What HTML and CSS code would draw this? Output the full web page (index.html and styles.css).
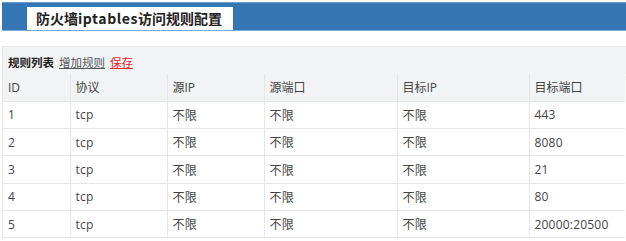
FILE: index.html
```html
<!DOCTYPE html>
<html>
<head>
<meta charset="utf-8">
<link rel="stylesheet" href="styles.css">
</head>
<body>
<div class="page">
  <div class="topbar">
    <div class="tab">防火墙<span class="latin">iptables</span>访问规则配置</div>
  </div>
  <div class="panel">
    <div class="toolbar">
      <span class="label">规则列表</span>
      <a class="link" href="#">增加规则</a>
      <a class="link save" href="#">保存</a>
    </div>
    <table class="rules">
      <colgroup>
        <col class="c1"><col class="c2"><col class="c3"><col class="c4"><col class="c5"><col class="c6">
      </colgroup>
      <thead>
        <tr><th>ID</th><th>协议</th><th>源IP</th><th>源端口</th><th>目标IP</th><th>目标端口</th></tr>
      </thead>
      <tbody>
        <tr><td>1</td><td>tcp</td><td>不限</td><td>不限</td><td>不限</td><td>443</td></tr>
        <tr><td>2</td><td>tcp</td><td>不限</td><td>不限</td><td>不限</td><td>8080</td></tr>
        <tr><td>3</td><td>tcp</td><td>不限</td><td>不限</td><td>不限</td><td>21</td></tr>
        <tr><td>4</td><td>tcp</td><td>不限</td><td>不限</td><td>不限</td><td>80</td></tr>
        <tr><td>5</td><td>tcp</td><td>不限</td><td>不限</td><td>不限</td><td>20000:20500</td></tr>
      </tbody>
    </table>
  </div>
</div>
</body>
</html>
```
FILE: styles.css
```css
html, body { margin: 0; padding: 0; background: #fff; }
body {
  font-family: "Open Sans", "Noto Sans CJK SC", sans-serif;
  font-size: 12px;
  color: #444;
}
.page { padding: 2px 0 0 2px; }
.topbar {
  height: 29px;
  background: #3477b4;
  border-top: 1px solid #6a9bcb;
  border-bottom: 1px solid #7aa8d4;
  box-sizing: border-box;
  display: flex;
  align-items: flex-end;
  padding-left: 25px;
}
.tab {
  background: #fff;
  height: 23px;
  padding: 0 0 0 9px;
  width: 206px;
  box-sizing: border-box;
  font-family: "Noto Sans CJK SC", sans-serif;
  font-weight: bold;
  font-size: 14px;
  line-height: 22px;
  color: #222;
  white-space: nowrap;
}
.latin { letter-spacing: 0.6px; }
.panel { margin-top: 15px; border-left: 1px solid #e6e6e6; }
.toolbar {
  height: 28px;
  background: #f2f3f5;
  border-top: 1px solid #e8e8e8;
  box-sizing: border-box;
  display: flex;
  align-items: center;
  gap: 5px;
  padding: 3px 0 0 5px;
  font-family: "Noto Sans CJK SC", sans-serif;
  font-size: 11.5px;
}
.label { font-weight: bold; color: #222; }
.link { color: #555; text-decoration: underline; }
.save { color: #e3242b; }
.rules {
  border-collapse: collapse;
  width: 622px;
  table-layout: fixed;
  font-size: 12px;
}
.c1 { width: 67px; }
.c2 { width: 97px; }
.c3 { width: 97px; }
.c4 { width: 133px; }
.c5 { width: 132px; }
.c6 { width: 96px; }
.rules th, .rules td {
  text-align: left;
  font-weight: normal;
  height: 27.33px;
  padding: 0 0 0 5px;
  box-sizing: border-box;
  border: none;
  border-bottom: 1px solid #e6e6e6;
  white-space: nowrap;
}
.rules td { letter-spacing: 0.2px; }
.rules th + th, .rules td + td { border-left: 1px solid #e6e6e6; }
.rules th { background: #f2f3f5; }
.rules td { background: #fff; }
```
